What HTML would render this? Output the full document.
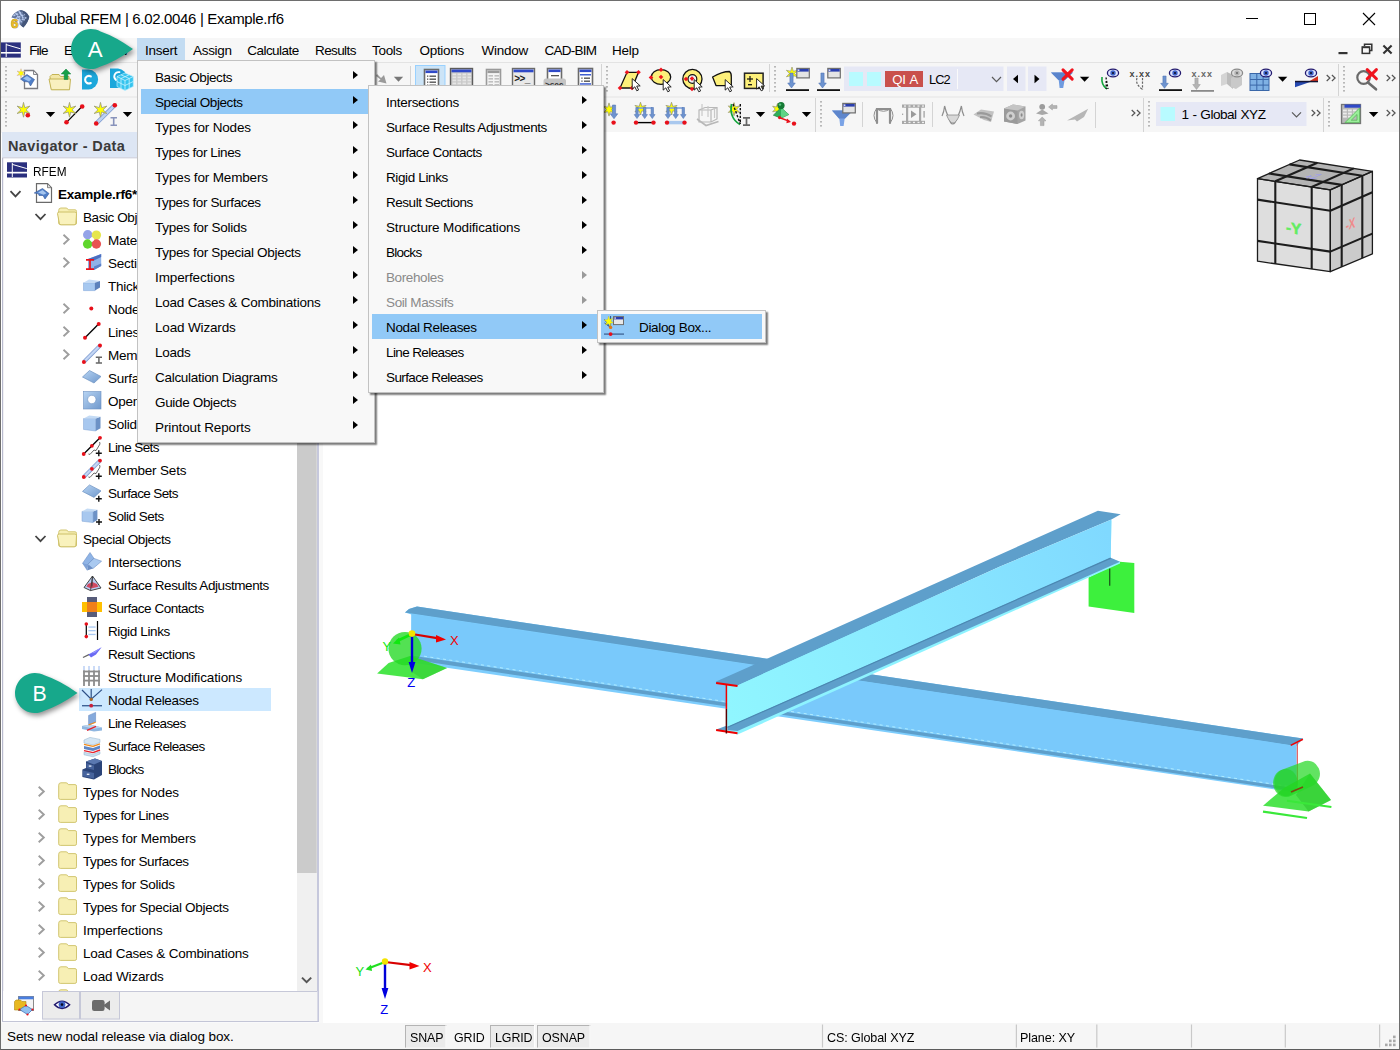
<!DOCTYPE html><html><head><meta charset="utf-8"><title>Dlubal RFEM | 6.02.0046 | Example.rf6</title><style>
*{box-sizing:border-box;margin:0;padding:0}
html,body{width:1400px;height:1050px;overflow:hidden;background:#fff}
body{font-family:"Liberation Sans",sans-serif;font-size:13.5px;letter-spacing:-0.23px;color:#000;position:relative}
.abs{position:absolute}
.t{position:absolute;white-space:pre;line-height:16px;height:16px}
#titlebar{left:0;top:0;width:1400px;height:38px;background:#fff}
#menubar{left:1px;top:38px;width:1398px;height:24px;background:#f7f7f7}
#tb{left:1px;top:62px;width:1398px;height:71px;background:#f6f6f6}
#nav{left:1px;top:133px;width:319px;height:890px;background:#fff}
#view{left:320px;top:132px;width:1079px;height:891px;background:#fff;border-left:3.4px solid #f8f8f8}
#status{left:1px;top:1023px;width:1398px;height:26px;background:#f6f6f6}
.menu{position:absolute;background:#f8f8f8;border:1px solid #c2c2c2;box-shadow:2px 2px 1.5px rgba(0,0,0,.5)}
.mi{position:absolute;left:3px;right:3px;height:25px}
.mi.sel{background:#91c9f7}
.mi .t{top:6px}
.mi.dis .t{color:#8a8a8a}
.arr{position:absolute;width:0;height:0;border-left:5.5px solid #000;border-top:4.9px solid transparent;border-bottom:4.9px solid transparent}
.mi.dis .arr{border-left-color:#9a9a9a}
.row{position:absolute;left:0;height:23px;width:296px}
.row .t{top:4px}
</style></head><body>
<div id="titlebar" class="abs">
<div class="t" style="left:35.5px;top:10px;font-size:15px;letter-spacing:-0.33px;line-height:18px;height:18px">Dlubal RFEM | 6.02.0046 | Example.rf6</div>
<svg class="abs" style="left:0;top:0" width="1400" height="38" viewBox="0 0 1400 38"><path d="M11.4 17.6Q13 12.6 20.2 10Q26.4 10.6 29.3 16.8Q28.4 22 23.4 27.6L19.6 24.4L19.4 19.6Z" fill="#60749c"/><path d="M20.2 10Q26.4 10.6 29.3 16.8Q28.4 22 23.4 27.6L21 25.4Q25 20 25.4 15.4Z" fill="#44567a"/><path d="M13.4 15.8L22.6 12.2M15.6 18.6L25 14.4M18.8 21L26.6 17.4M15.6 13L21.6 22.4M18.8 11.2L24.6 20.4" fill="none" stroke="#b6c8ec" stroke-width="1.5" stroke-dasharray="2 1.2"/><text x="14.7" y="28.4" font-family="Liberation Sans, sans-serif" font-weight="bold" font-size="13.5" fill="#e8bc24" text-anchor="middle" stroke="#8a7020" stroke-width="0.7" paint-order="stroke">6</text><rect x="1246" y="18" width="12" height="1" fill="#000" /><rect x="1304.5" y="13.5" width="11" height="11" fill="none" stroke="#000" stroke-width="1" /><path d="M1363 13L1375 25M1375 13L1363 25" stroke="#000" stroke-width="1.1" fill="none"/></svg>
</div>
<div id="menubar" class="abs">
<div class="abs" style="left:136px;top:0;width:48px;height:23px;background:#c3dcf2"></div>
<div class="t" style="left:28.2px;top:5px;letter-spacing:-0.85px">File</div>
<div class="t" style="left:63px;top:5px;letter-spacing:-0.23px">Edit</div>
<div class="t" style="left:99px;top:5px;letter-spacing:-0.23px">View</div>
<div class="t" style="left:144px;top:5px;letter-spacing:-0.23px">Insert</div>
<div class="t" style="left:192px;top:5px;letter-spacing:-0.3px">Assign</div>
<div class="t" style="left:246.3px;top:5px;letter-spacing:-0.55px">Calculate</div>
<div class="t" style="left:314px;top:5px;letter-spacing:-0.6px">Results</div>
<div class="t" style="left:371px;top:5px;letter-spacing:-0.3px">Tools</div>
<div class="t" style="left:418.5px;top:5px;letter-spacing:-0.3px">Options</div>
<div class="t" style="left:480.5px;top:5px;letter-spacing:-0.23px">Window</div>
<div class="t" style="left:543.5px;top:5px;letter-spacing:-0.75px">CAD-BIM</div>
<div class="t" style="left:611px;top:5px;letter-spacing:-0.23px">Help</div>
<svg class="abs" style="left:0;top:0" width="1398" height="24" viewBox="1 38 1398 24"><rect x="1" y="42.4" width="19.8" height="15.2" fill="#2a2f7e" /><path d="M6.2 43.5V57M6.2 44.6L20.5 48.8" stroke="#fff" stroke-width="1" fill="none"/><rect x="1" y="52" width="19.8" height="1.6" fill="#fff" /><rect x="1338.5" y="52" width="9" height="2.2" fill="#333" /><path d="M1364.5 46V44.3H1371.8V50.5H1370" fill="none" stroke="#333" stroke-width="1.5"/><rect x="1362.2" y="47" width="7.4" height="6.4" fill="none" stroke="#333" stroke-width="1.5" /><rect x="1362.2" y="46.6" width="7.4" height="1.6" fill="#333" /><path d="M1383.4 45.4L1391.6 53.6M1391.6 45.4L1383.4 53.6" stroke="#333" stroke-width="2.1" fill="none"/></svg>
</div>
<div id="tb" class="abs"><svg class="abs" style="left:0;top:0" width="1398" height="71" viewBox="1 62 1398 71" font-family="Liberation Sans, sans-serif">
<rect x="1" y="62" width="1398" height="1" fill="#e3e3e3" />
<rect x="1" y="96.5" width="1398" height="1" fill="#e3e3e3" />
<rect x="5.2" y="66" width="1.6" height="1.6" fill="#a9a9a9"/><rect x="5.2" y="70" width="1.6" height="1.6" fill="#a9a9a9"/><rect x="5.2" y="74" width="1.6" height="1.6" fill="#a9a9a9"/><rect x="5.2" y="78" width="1.6" height="1.6" fill="#a9a9a9"/><rect x="5.2" y="82" width="1.6" height="1.6" fill="#a9a9a9"/><rect x="5.2" y="86" width="1.6" height="1.6" fill="#a9a9a9"/><rect x="5.2" y="90" width="1.6" height="1.6" fill="#a9a9a9"/>
<polygon points="24.5,70.5 33.5,70.5 37.5,74.5 37.5,88.5 24.5,88.5" fill="#fff" stroke="#7a7a80" stroke-width="1.3" />
<polygon points="33.5,70.5 33.5,74.5 37.5,74.5" fill="#e8e8e8" stroke="#7a7a80" stroke-width="0.9" />
<polygon points="20.5,79 27,74.5 34.5,79.5 30.5,86 28.5,82 24,81.5" fill="#4f7fc8" stroke="#3a5a9a" stroke-width="0.6" />
<polygon points="23,78.5 27,76 31.5,79 29,81.5" fill="#9cc0ee" />
<polygon points="21,68.7 21.9,71.74 24.98,71 22.8,73.3 24.98,75.6 21.9,74.86 21,77.9 20.1,74.86 17.02,75.6 19.2,73.3 17.02,71 20.1,71.74" fill="#ffff00" stroke="#caa" stroke-width="0.5" stroke-linejoin="miter"/>
<polygon points="50,76.5 52,74.5 59,74.5 60.5,76.5 69,76.5 69,89.5 51.5,89.5" fill="#f3e7a8" stroke="#c4b456" stroke-width="1" />
<polygon points="49,79 70.5,79 69.5,89.8 51.3,89.8" fill="#f9f0bf" stroke="#c4b456" stroke-width="1" />
<polygon points="66,69 70.8,74 67.8,74 67.8,79.5 64.2,79.5 64.2,74 61.2,74" fill="#17a049" stroke="#0d8038" stroke-width="0.5" />
<path d="M82 69.5H88.5A9.6 10 0 0 1 88.5 89.5H82Z" fill="#1ca7db"/>
<path d="M90.8 76.4A3.8 3.8 0 1 0 90.8 83" fill="none" stroke="#fff" stroke-width="2.1" stroke-linecap="round"/>
<path d="M110 68.5H118A9.8 9.8 0 0 1 127 78V88H110Z" fill="#1ca7db"/>
<path d="M119.5 72.2A4.4 4.4 0 0 0 116 80" fill="none" stroke="#fff" stroke-width="1.8" stroke-linecap="round"/>
<polygon points="117,76.5 125,73 133.3,76.5 133.3,86.5 125,90.5 117,86.5" fill="#35c4ee" stroke="#bdeeff" stroke-width="0.7" />
<path d="M117 76.5L125 80.5L133.3 76.5M125 80.5V90.5M117 81.5L125 85.5L133.3 81.5M121 74.8L129.2 78.5V88.5M129.2 74.8L121 78.5V88.5" fill="none" stroke="#c9f2ff" stroke-width="0.8"/>
<polygon points="377,74 381,78 384,75 386.5,83.5 378,81.5 380.5,79.5 376,76" fill="#9a9a9a" />
<polygon points="393.8,76.8 403.2,76.8 398.5,81.8" fill="#777"/>
<rect x="410" y="66" width="1" height="26" fill="#d4d4d4"/>
<rect x="415.5" y="65.5" width="29.5" height="27" fill="#cce4f7" stroke="#99d1ff" stroke-width="1" />
<rect x="424.5" y="69.5" width="14" height="19" fill="#fff" stroke="#6a6a6a" stroke-width="1.6" />
<rect x="425.5" y="70.5" width="12" height="2.6" fill="#2f49c8" />
<rect x="429.5" y="75.5" width="6.5" height="1.4" fill="#555" />
<rect x="427" y="75.5" width="1.3" height="1.3" fill="#555" />
<rect x="429.5" y="78.5" width="6.5" height="1.4" fill="#555" />
<rect x="427" y="78.5" width="1.3" height="1.3" fill="#555" />
<rect x="429.5" y="81.5" width="6.5" height="1.4" fill="#555" />
<rect x="427" y="81.5" width="1.3" height="1.3" fill="#555" />
<rect x="429.5" y="84.5" width="6.5" height="1.4" fill="#555" />
<rect x="427" y="84.5" width="1.3" height="1.3" fill="#555" />
<rect x="450.5" y="68.5" width="22" height="20" fill="#c9c9c9" stroke="#5c5c5c" stroke-width="1.4" />
<rect x="451.5" y="69.5" width="20" height="2.8" fill="#2f49c8" />
<rect x="452.5" y="73.5" width="3.6" height="1.8" fill="#e6e6e6" />
<rect x="457.5" y="73.5" width="3.6" height="1.8" fill="#e6e6e6" />
<rect x="462.5" y="73.5" width="3.6" height="1.8" fill="#e6e6e6" />
<rect x="467.5" y="73.5" width="3.6" height="1.8" fill="#e6e6e6" />
<rect x="452.5" y="76.5" width="3.6" height="1.8" fill="#e6e6e6" />
<rect x="457.5" y="76.5" width="3.6" height="1.8" fill="#e6e6e6" />
<rect x="462.5" y="76.5" width="3.6" height="1.8" fill="#e6e6e6" />
<rect x="467.5" y="76.5" width="3.6" height="1.8" fill="#e6e6e6" />
<rect x="452.5" y="79.5" width="3.6" height="1.8" fill="#e6e6e6" />
<rect x="457.5" y="79.5" width="3.6" height="1.8" fill="#e6e6e6" />
<rect x="462.5" y="79.5" width="3.6" height="1.8" fill="#e6e6e6" />
<rect x="467.5" y="79.5" width="3.6" height="1.8" fill="#e6e6e6" />
<rect x="452.5" y="82.5" width="3.6" height="1.8" fill="#e6e6e6" />
<rect x="457.5" y="82.5" width="3.6" height="1.8" fill="#e6e6e6" />
<rect x="462.5" y="82.5" width="3.6" height="1.8" fill="#e6e6e6" />
<rect x="467.5" y="82.5" width="3.6" height="1.8" fill="#e6e6e6" />
<rect x="452.5" y="85.5" width="3.6" height="1.8" fill="#e6e6e6" />
<rect x="457.5" y="85.5" width="3.6" height="1.8" fill="#e6e6e6" />
<rect x="462.5" y="85.5" width="3.6" height="1.8" fill="#e6e6e6" />
<rect x="467.5" y="85.5" width="3.6" height="1.8" fill="#e6e6e6" />
<rect x="486.5" y="69.5" width="14" height="19" fill="#f4f4f4" stroke="#9a9a9a" stroke-width="1.6" />
<rect x="487.5" y="70.5" width="12" height="2.6" fill="#9a9a9a" />
<rect x="488.5" y="75" width="4.5" height="1.6" fill="#c0c0c0" />
<rect x="494.5" y="75" width="4.5" height="1.6" fill="#c0c0c0" />
<rect x="488.5" y="78" width="4.5" height="1.6" fill="#c0c0c0" />
<rect x="494.5" y="78" width="4.5" height="1.6" fill="#c0c0c0" />
<rect x="488.5" y="81" width="4.5" height="1.6" fill="#c0c0c0" />
<rect x="494.5" y="81" width="4.5" height="1.6" fill="#c0c0c0" />
<rect x="488.5" y="84" width="4.5" height="1.6" fill="#c0c0c0" />
<rect x="494.5" y="84" width="4.5" height="1.6" fill="#c0c0c0" />
<rect x="512.5" y="68.5" width="22" height="19" fill="#e9e9e9" stroke="#6a6a6a" stroke-width="1.4" />
<rect x="513.5" y="69.5" width="20" height="2.8" fill="#2f49c8" />
<text x="514.2" y="81.5" font-size="10" fill="#222" font-weight="bold" letter-spacing="-0.6">&gt;&gt;_</text>
<rect x="547.5" y="68.5" width="14" height="19" fill="#fff" stroke="#6a6a6a" stroke-width="1.6" />
<rect x="548.5" y="69.5" width="12" height="2.6" fill="#2f49c8" />
<rect x="551" y="75" width="8" height="1.3" fill="#555" />
<rect x="543.5" y="78.5" width="22.5" height="10" fill="#c4c4c4" rx="2.5"/>
<text x="545" y="87.5" font-size="8.5" fill="#333" font-weight="bold">&gt;sec</text>
<rect x="578.5" y="68.5" width="14" height="19" fill="#fff" stroke="#6a6a6a" stroke-width="1.6" />
<rect x="579.5" y="69.5" width="12" height="2.6" fill="#2f49c8" />
<rect x="580" y="74" width="11" height="1.5" fill="#3f5fd0" />
<rect x="584" y="77.5" width="6" height="1.4" fill="#555" />
<rect x="581.3" y="77.5" width="1.3" height="1.3" fill="#555" />
<rect x="584" y="80.5" width="6" height="1.4" fill="#555" />
<rect x="581.3" y="80.5" width="1.3" height="1.3" fill="#555" />
<rect x="580" y="83.2" width="11" height="1.5" fill="#3f5fd0" />
<rect x="601" y="64" width="1" height="28" fill="#d4d4d4"/>
<rect x="606.2" y="66" width="1.6" height="1.6" fill="#a9a9a9"/><rect x="606.2" y="70" width="1.6" height="1.6" fill="#a9a9a9"/><rect x="606.2" y="74" width="1.6" height="1.6" fill="#a9a9a9"/><rect x="606.2" y="78" width="1.6" height="1.6" fill="#a9a9a9"/><rect x="606.2" y="82" width="1.6" height="1.6" fill="#a9a9a9"/><rect x="606.2" y="86" width="1.6" height="1.6" fill="#a9a9a9"/><rect x="606.2" y="90" width="1.6" height="1.6" fill="#a9a9a9"/>
<polygon points="627,72.3 638.5,72.3 632,88 620,88" fill="#fdf07a" stroke="#111" stroke-width="1.3" />
<path d="M624.7 72.3L627 70L629.3 72.3L627 74.6Z" fill="#f0141e"/>
<path d="M636.2 72.3L638.5 70L640.8 72.3L638.5 74.6Z" fill="#f0141e"/>
<path d="M629.7 88L632 85.7L634.3 88L632 90.3Z" fill="#f0141e"/>
<path d="M617.7 88L620 85.7L622.3 88L620 90.3Z" fill="#f0141e"/>
<polygon points="632.2,78.6 632.2,89.1 634.8,86.8 636.8,90.8 638.6,89.9 636.7,86.1 640.2,85.9" fill="#fff" stroke="#111" stroke-width="0.9" stroke-linejoin="round"/>
<ellipse cx="661" cy="77" rx="9.7" ry="7.4" fill="#fdf07a" stroke="#111" stroke-width="1.3"/>
<path d="M658.7 69.8L661 67.5L663.3 69.8L661 72.1Z" fill="#f0141e"/>
<path d="M648.7 77.5L651 75.2L653.3 77.5L651 79.8Z" fill="#f0141e"/>
<path d="M658.7 77L661 74.7L663.3 77L661 79.3Z" fill="#f0141e"/>
<polygon points="663.2,79.6 663.2,90.1 665.8,87.8 667.8,91.8 669.6,90.9 667.7,87.1 671.2,86.9" fill="#fff" stroke="#111" stroke-width="0.9" stroke-linejoin="round"/>
<circle cx="692.4" cy="79" r="9.6" fill="#fdf07a" stroke="#111" stroke-width="1.3"/>
<circle cx="692.4" cy="79" r="4.4" fill="#f3f3f3" stroke="#111" stroke-width="1.2"/>
<path d="M683.7 79L686 76.7L688.3 79L686 81.3Z" fill="#f0141e"/>
<path d="M689.7 78.6L692 76.3L694.3 78.6L692 80.9Z" fill="#f0141e"/>
<path d="M689.7 89L692 86.7L694.3 89L692 91.3Z" fill="#f0141e"/>
<polygon points="694.2,79.6 694.2,90.1 696.8,87.8 698.8,91.8 700.6,90.9 698.7,87.1 702.2,86.9" fill="#fff" stroke="#111" stroke-width="0.9" stroke-linejoin="round"/>
<path d="M712.6 77Q722 71.5 729.5 71.5Q731.5 73 731.3 77V85.6H716Z" fill="#fdf07a" stroke="#111" stroke-width="1.3" stroke-linejoin="round"/>
<polygon points="725.2,79.6 725.2,90.1 727.8,87.8 729.8,91.8 731.6,90.9 729.7,87.1 733.2,86.9" fill="#fff" stroke="#111" stroke-width="0.9" stroke-linejoin="round"/>
<rect x="744.5" y="73.2" width="18.6" height="15.2" fill="#fdf07a" stroke="#222" stroke-width="1.5" />
<line x1="747" y1="79" x2="753" y2="79" stroke="#111" stroke-width="1.2" />
<line x1="750" y1="76" x2="750" y2="82" stroke="#111" stroke-width="1.2" />
<line x1="748" y1="84.7" x2="752" y2="84.7" stroke="#111" stroke-width="1.3" />
<polygon points="756.6,78.6 756.6,89.1 759.2,86.8 761.2,90.8 763,89.9 761.1,86.1 764.6,85.9" fill="#fff" stroke="#111" stroke-width="0.9" stroke-linejoin="round"/>
<rect x="769" y="64" width="1" height="28" fill="#d4d4d4"/>
<rect x="774.2" y="66" width="1.6" height="1.6" fill="#a9a9a9"/><rect x="774.2" y="70" width="1.6" height="1.6" fill="#a9a9a9"/><rect x="774.2" y="74" width="1.6" height="1.6" fill="#a9a9a9"/><rect x="774.2" y="78" width="1.6" height="1.6" fill="#a9a9a9"/><rect x="774.2" y="82" width="1.6" height="1.6" fill="#a9a9a9"/><rect x="774.2" y="86" width="1.6" height="1.6" fill="#a9a9a9"/><rect x="774.2" y="90" width="1.6" height="1.6" fill="#a9a9a9"/>
<polygon points="792,67 793.3,71.25 797.63,70.25 794.6,73.5 797.63,76.75 793.3,75.75 792,80 790.7,75.75 786.37,76.75 789.4,73.5 786.37,70.25 790.7,71.25" fill="#ffff00" stroke="#9a9a7a" stroke-width="0.7" stroke-linejoin="miter"/>
<polygon points="789.9,73 793.1,73 793.1,83 795.3,83 791.5,88 787.7,83 789.9,83" fill="#6d93cf" stroke="#4a6fb0" stroke-width="0.5"/>
<rect x="786" y="89.2" width="23" height="1.8" fill="#111" />
<rect x="796.8" y="68.4" width="12.5" height="9.5" fill="#e4e4e4" stroke="#6e6e6e" stroke-width="1.2"/><rect x="797.4" y="69" width="11.3" height="2.6" fill="#2b3fae"/><rect x="797.8" y="69.4" width="1.6" height="1.6" fill="#dde"/>
<polygon points="820.9,73 824.1,73 824.1,83 826.3,83 822.5,88 818.7,83 820.9,83" fill="#6d93cf" stroke="#4a6fb0" stroke-width="0.5"/>
<rect x="817" y="89.2" width="23" height="1.8" fill="#111" />
<rect x="827.8" y="68.4" width="12.5" height="9.5" fill="#e4e4e4" stroke="#6e6e6e" stroke-width="1.2"/><rect x="828.4" y="69" width="11.3" height="2.6" fill="#2b3fae"/><rect x="828.8" y="69.4" width="1.6" height="1.6" fill="#dde"/>
<rect x="844" y="66.5" width="159.5" height="24.5" fill="#e6e8f5" />
<rect x="849" y="72" width="14" height="14" fill="#b8fbff" />
<rect x="867" y="72" width="14" height="14" fill="#b8fbff" />
<rect x="885" y="71" width="38" height="16" fill="#c9504c" />
<text x="892.3" y="83.8" font-size="13.2" fill="#fff" letter-spacing="-0.3" word-spacing="1.2">QI A</text>
<text x="929" y="83.8" font-size="12.8" fill="#000" letter-spacing="-0.9">LC2</text>
<rect x="957" y="69" width="1" height="20" fill="#fafafa" />
<polyline points="992,77 996.5,81.6 1001,77" fill="none" stroke="#5a5a5a" stroke-width="1.2"/>
<rect x="1007" y="66.5" width="18.5" height="24.5" fill="#e6e8f5" />
<rect x="1028" y="66.5" width="18.5" height="24.5" fill="#e6e8f5" />
<polygon points="1013,79 1018,74.8 1018,83.2" fill="#000" />
<polygon points="1039.5,79 1034.5,74.8 1034.5,83.2" fill="#000" />
<polygon points="1051,72.5 1073,72.5 1064.5,80.5 1063.2,88 1059.6,88 1058.8,80.5" fill="#6f9be0" />
<polygon points="1051,72.5 1073,72.5 1065,80 1058.5,80" fill="#5a84cc" />
<line x1="1063" y1="69.9" x2="1072.2" y2="79.1" stroke="#f0141e" stroke-width="3" stroke-linecap="round"/><line x1="1063" y1="79.1" x2="1072.2" y2="69.9" stroke="#f0141e" stroke-width="3" stroke-linecap="round"/>
<polygon points="1079.9,76.8 1089.3,76.8 1084.6,81.8" fill="#000"/>
<path d="M1102 77Q1101 85 1107 89" fill="none" stroke="#14a63c" stroke-width="1.6"/>
<path d="M1106 77.5L1108 89M1106.2 77.5V89" fill="none" stroke="#111" stroke-width="1.3" stroke-dasharray="2 1.5"/>
<ellipse cx="1113" cy="73" rx="5.6" ry="3.9" fill="#dfe6ff" stroke="#231a6e" stroke-width="1.3"/><circle cx="1113" cy="73" r="2.7" fill="#3f63c8"/><circle cx="1113" cy="73" r="1" fill="#0a0a20"/>
<text x="1129.5" y="76.5" font-size="9" fill="#444" font-weight="bold" letter-spacing="1">x.xx</text>
<path d="M1137 78Q1135 84 1142.5 89.5M1142.5 78V89.5" fill="none" stroke="#666" stroke-width="1.2" stroke-dasharray="2.2 1.4"/>
<polygon points="1162.9,76 1166.1,76 1166.1,83.3 1168.3,83.3 1164.5,88.3 1160.7,83.3 1162.9,83.3" fill="#6d93cf" stroke="#4a6fb0" stroke-width="0.5"/>
<rect x="1159" y="89.2" width="23" height="1.8" fill="#111" />
<ellipse cx="1175" cy="73" rx="5.6" ry="3.9" fill="#dfe6ff" stroke="#231a6e" stroke-width="1.3"/><circle cx="1175" cy="73" r="2.7" fill="#3f63c8"/><circle cx="1175" cy="73" r="1" fill="#0a0a20"/>
<text x="1191.5" y="76.5" font-size="9" fill="#666" font-weight="bold" letter-spacing="1">x.xx</text>
<polygon points="1194.9,78 1198.1,78 1198.1,84.5 1200.3,84.5 1196.5,89.5 1192.7,84.5 1194.9,84.5" fill="#b4b4b4" stroke="#9a9a9a" stroke-width="0.5"/>
<rect x="1191" y="90" width="23" height="1.8" fill="#8a8a8a" />
<polygon points="1221,75 1227,72 1227,84 1221,86" fill="#d4d4d4" />
<polygon points="1227,72 1233,75 1233,89 1227,84" fill="#bcbcbc" />
<polygon points="1231,78 1238,74 1242,77 1242,85 1236,89 1231,87" fill="#c9c9c9" />
<ellipse cx="1237" cy="73" rx="5.6" ry="3.9" fill="#dddddd" stroke="#8a8a8a" stroke-width="1.3"/><circle cx="1237" cy="73" r="2.7" fill="#b5b5b5"/><circle cx="1237" cy="73" r="1" fill="#666"/>
<rect x="1250" y="73.5" width="19" height="17" fill="#7fb1e4" stroke="#3a67a8" stroke-width="1" />
<rect x="1256.3" y="73.5" width="1" height="17" fill="#3a67a8" />
<rect x="1262.6" y="73.5" width="1" height="17" fill="#3a67a8" />
<rect x="1250" y="79" width="19" height="1" fill="#3a67a8" />
<rect x="1250" y="84.6" width="19" height="1" fill="#3a67a8" />
<ellipse cx="1266" cy="73" rx="5.6" ry="3.9" fill="#dfe6ff" stroke="#231a6e" stroke-width="1.3"/><circle cx="1266" cy="73" r="2.7" fill="#3f63c8"/><circle cx="1266" cy="73" r="1" fill="#0a0a20"/>
<polygon points="1277.9,76.8 1287.3,76.8 1282.6,81.8" fill="#000"/>
<polygon points="1295,82 1310,82 1295,87.3" fill="#2548b0" />
<polygon points="1309,81.5 1318,76 1318,81.5" fill="#d6301c" />
<rect x="1295" y="80.8" width="23" height="1.5" fill="#141430" />
<ellipse cx="1311" cy="73" rx="5.6" ry="3.9" fill="#dfe6ff" stroke="#231a6e" stroke-width="1.3"/><circle cx="1311" cy="73" r="2.7" fill="#3f63c8"/><circle cx="1311" cy="73" r="1" fill="#0a0a20"/>
<polyline points="1326.7,75 1329.9,78 1326.7,81" fill="none" stroke="#555" stroke-width="1.2"/><polyline points="1331.9,75 1335.1,78 1331.9,81" fill="none" stroke="#555" stroke-width="1.2"/>
<rect x="1338" y="64" width="1" height="32" fill="#d4d4d4"/>
<rect x="1343.2" y="66" width="1.6" height="1.6" fill="#a9a9a9"/><rect x="1343.2" y="70" width="1.6" height="1.6" fill="#a9a9a9"/><rect x="1343.2" y="74" width="1.6" height="1.6" fill="#a9a9a9"/><rect x="1343.2" y="78" width="1.6" height="1.6" fill="#a9a9a9"/><rect x="1343.2" y="82" width="1.6" height="1.6" fill="#a9a9a9"/><rect x="1343.2" y="86" width="1.6" height="1.6" fill="#a9a9a9"/><rect x="1343.2" y="90" width="1.6" height="1.6" fill="#a9a9a9"/>
<circle cx="1363.6" cy="77.5" r="6.3" fill="none" stroke="#6a6a6a" stroke-width="2.2"/>
<line x1="1368" y1="82.5" x2="1376" y2="89.3" stroke="#6a6a6a" stroke-width="2.6" stroke-linecap="round"/>
<line x1="1367.2" y1="69.6" x2="1376.4" y2="78.8" stroke="#f0141e" stroke-width="3" stroke-linecap="round"/><line x1="1367.2" y1="78.8" x2="1376.4" y2="69.6" stroke="#f0141e" stroke-width="3" stroke-linecap="round"/>
<polyline points="1386.7,75 1389.9,78 1386.7,81" fill="none" stroke="#555" stroke-width="1.2"/><polyline points="1391.9,75 1395.1,78 1391.9,81" fill="none" stroke="#555" stroke-width="1.2"/>
<rect x="5.2" y="101" width="1.6" height="1.6" fill="#a9a9a9"/><rect x="5.2" y="105" width="1.6" height="1.6" fill="#a9a9a9"/><rect x="5.2" y="109" width="1.6" height="1.6" fill="#a9a9a9"/><rect x="5.2" y="113" width="1.6" height="1.6" fill="#a9a9a9"/><rect x="5.2" y="117" width="1.6" height="1.6" fill="#a9a9a9"/><rect x="5.2" y="121" width="1.6" height="1.6" fill="#a9a9a9"/><rect x="5.2" y="125" width="1.6" height="1.6" fill="#a9a9a9"/>
<polygon points="23.5,102.4 24.75,107.63 29.91,106.1 26,109.8 29.91,113.5 24.75,111.97 23.5,117.2 22.25,111.97 17.09,113.5 21,109.8 17.09,106.1 22.25,107.63" fill="#ffff00" stroke="#9a9a7a" stroke-width="0.8" stroke-linejoin="miter"/>
<circle cx="27.8" cy="115.2" r="2.3" fill="#e8101a"/>
<polygon points="45.8,111.9 55.2,111.9 50.5,116.9" fill="#000"/>
<line x1="66.5" y1="122.3" x2="82" y2="106.5" stroke="#000" stroke-width="1.2" />
<polygon points="69.5,102.4 70.75,107.63 75.91,106.1 72,109.8 75.91,113.5 70.75,111.97 69.5,117.2 68.25,111.97 63.09,113.5 67,109.8 63.09,106.1 68.25,107.63" fill="#ffff00" stroke="#9a9a7a" stroke-width="0.8" stroke-linejoin="miter"/>
<circle cx="66.5" cy="122.3" r="2.3" fill="#e8101a"/>
<circle cx="82.2" cy="106.5" r="2.3" fill="#e8101a"/>
<line x1="96.2" y1="123.5" x2="114.6" y2="105.3" stroke="#7f9bd0" stroke-width="4.2" />
<line x1="96.2" y1="123.5" x2="114.6" y2="105.3" stroke="#bcd2f2" stroke-width="2.6" />
<polygon points="100.5,102.4 101.75,107.63 106.91,106.1 103,109.8 106.91,113.5 101.75,111.97 100.5,117.2 99.25,111.97 94.09,113.5 98,109.8 94.09,106.1 99.25,107.63" fill="#ffff00" stroke="#9a9a7a" stroke-width="0.8" stroke-linejoin="miter"/>
<circle cx="96.2" cy="123.5" r="2.3" fill="#e8101a"/>
<circle cx="114.8" cy="105.2" r="2.3" fill="#e8101a"/>
<path d="M110.5 117.8H117M110.5 125.2H117M113.7 117.8V125.2" fill="none" stroke="#8893bb" stroke-width="1.6"/>
<polygon points="122.8,111.9 132.2,111.9 127.5,116.9" fill="#000"/>
<polygon points="609,102.9 610.3,107.25 614.72,106.2 611.6,109.5 614.72,112.8 610.3,111.75 609,116.1 607.7,111.75 603.28,112.8 606.4,109.5 603.28,106.2 607.7,107.25" fill="#ffff00" stroke="#9a9a7a" stroke-width="0.8" stroke-linejoin="miter"/>
<polygon points="612.4,105 615.6,105 615.6,113.8 617.8,113.8 614,118.8 610.2,113.8 612.4,113.8" fill="#6d93cf" stroke="#4a6fb0" stroke-width="0.5"/>
<circle cx="613.6" cy="122.6" r="2.2" fill="#e8101a"/>
<polygon points="640.5,102.2 641.8,106.35 646.04,105.4 643.1,108.6 646.04,111.8 641.8,110.85 640.5,115 639.2,110.85 634.96,111.8 637.9,108.6 634.96,105.4 639.2,106.35" fill="#ffff00" stroke="#9a9a7a" stroke-width="0.8" stroke-linejoin="miter"/><path d="M637 108H652.5" fill="none" stroke="#7fa0d8" stroke-width="1.6"/><polygon points="635.8,107.5 638.2,107.5 638.2,114.6 639.8,114.6 637,118.6 634.2,114.6 635.8,114.6" fill="#6d93cf" stroke="#4a6fb0" stroke-width="0.5"/><polygon points="643.5,107.5 645.9,107.5 645.9,114.6 647.5,114.6 644.7,118.6 641.9,114.6 643.5,114.6" fill="#6d93cf" stroke="#4a6fb0" stroke-width="0.5"/><polygon points="651.1,107.5 653.5,107.5 653.5,114.6 655.1,114.6 652.3,118.6 649.5,114.6 651.1,114.6" fill="#6d93cf" stroke="#4a6fb0" stroke-width="0.5"/><line x1="636" y1="122.6" x2="653.5" y2="122.6" stroke="#000" stroke-width="1.4" /><circle cx="636" cy="122.6" r="2.2" fill="#e8101a"/><circle cx="653.5" cy="122.6" r="2.2" fill="#e8101a"/>
<polygon points="671.5,102.2 672.8,106.35 677.04,105.4 674.1,108.6 677.04,111.8 672.8,110.85 671.5,115 670.2,110.85 665.96,111.8 668.9,108.6 665.96,105.4 670.2,106.35" fill="#ffff00" stroke="#9a9a7a" stroke-width="0.8" stroke-linejoin="miter"/><path d="M668 108H683.5" fill="none" stroke="#7fa0d8" stroke-width="1.6"/><polygon points="666.8,107.5 669.2,107.5 669.2,114.6 670.8,114.6 668,118.6 665.2,114.6 666.8,114.6" fill="#6d93cf" stroke="#4a6fb0" stroke-width="0.5"/><polygon points="674.5,107.5 676.9,107.5 676.9,114.6 678.5,114.6 675.7,118.6 672.9,114.6 674.5,114.6" fill="#6d93cf" stroke="#4a6fb0" stroke-width="0.5"/><polygon points="682.1,107.5 684.5,107.5 684.5,114.6 686.1,114.6 683.3,118.6 680.5,114.6 682.1,114.6" fill="#6d93cf" stroke="#4a6fb0" stroke-width="0.5"/><line x1="667" y1="122.6" x2="684.5" y2="122.6" stroke="#a9c8ee" stroke-width="3.4" /><circle cx="667" cy="122.6" r="2.2" fill="#e8101a"/><circle cx="684.5" cy="122.6" r="2.2" fill="#e8101a"/>
<g stroke="#b8b8b8" fill="none" stroke-width="1.2"><path d="M699 110L705 107.5H717V119L711 122H699ZM699 110H711V122M711 110L717 107.5"/><path d="M697 119L706 125.5L718.5 121.5" stroke-width="1.6"/><path d="M702 104V116M708 106V117M714.5 108V118" stroke="#c8c8c8"/></g>
<polygon points="734,102.6 735.3,106.95 739.72,105.9 736.6,109.2 739.72,112.5 735.3,111.45 734,115.8 732.7,111.45 728.28,112.5 731.4,109.2 728.28,105.9 732.7,106.95" fill="#ffff00" stroke="#9a9a7a" stroke-width="0.8" stroke-linejoin="miter"/>
<path d="M731.5 104Q729 118 740 124.6" fill="none" stroke="#14a63c" stroke-width="1.7"/>
<path d="M733 104L740.3 124M740.3 104V124" fill="none" stroke="#111" stroke-width="1.4" stroke-dasharray="2.4 1.5"/>
<path d="M743 117.8H750M743 125.2H750M746.5 117.8V125.2" fill="none" stroke="#666" stroke-width="1.7"/>
<polygon points="755.8,111.9 765.2,111.9 760.5,116.9" fill="#000"/>
<polygon points="777.5,103.4 778.65,107.01 782.35,106.2 779.8,109 782.35,111.8 778.65,110.99 777.5,114.6 776.35,110.99 772.65,111.8 775.2,109 772.65,106.2 776.35,107.01" fill="#ffff00" stroke="#9a9a7a" stroke-width="0.8" stroke-linejoin="miter"/>
<polygon points="773.3,115.2 781,107.5 788.8,114.6 781,118.2" fill="#2fae5a" stroke="#1a7a3a" stroke-width="0.6" />
<polygon points="781,107.5 788.8,114.6 781,118.2" fill="#5ed486" />
<circle cx="781" cy="105.6" r="3.6" fill="#157a35"/><circle cx="780" cy="104.6" r="1.2" fill="#5fc883"/>
<line x1="780.5" y1="118" x2="789" y2="121.2" stroke="#e8101a" stroke-width="1.4" />
<polygon points="787,118.6 791,122 786.4,123.2" fill="#e8101a" />
<circle cx="779.6" cy="117.6" r="1.6" fill="#e8101a"/>
<circle cx="794" cy="123.6" r="2.2" fill="#e8101a"/>
<polygon points="801.8,111.9 811.2,111.9 806.5,116.9" fill="#000"/>
<rect x="815" y="98" width="1" height="34" fill="#d4d4d4"/>
<rect x="820.2" y="101" width="1.6" height="1.6" fill="#a9a9a9"/><rect x="820.2" y="105" width="1.6" height="1.6" fill="#a9a9a9"/><rect x="820.2" y="109" width="1.6" height="1.6" fill="#a9a9a9"/><rect x="820.2" y="113" width="1.6" height="1.6" fill="#a9a9a9"/><rect x="820.2" y="117" width="1.6" height="1.6" fill="#a9a9a9"/><rect x="820.2" y="121" width="1.6" height="1.6" fill="#a9a9a9"/><rect x="820.2" y="125" width="1.6" height="1.6" fill="#a9a9a9"/>
<polygon points="832,110.5 853,110.5 844.6,119 843.6,126 840.2,126 839.4,119" fill="#7aa3e6" />
<polygon points="832,110.5 853,110.5 845,118.5 839,118.5" fill="#5e86cc" />
<rect x="842.8" y="103.4" width="12.5" height="9.5" fill="#e4e4e4" stroke="#6e6e6e" stroke-width="1.2"/><rect x="843.4" y="104" width="11.3" height="2.6" fill="#2b3fae"/><rect x="843.8" y="104.4" width="1.6" height="1.6" fill="#dde"/>
<rect x="862" y="102" width="1" height="25" fill="#d4d4d4"/>
<g fill="none" stroke="#8e8e8e"><path d="M877 123V109H890V123" stroke-width="2.2" stroke-linecap="round"/><path d="M877 109Q883.5 113.5 890 109" stroke-width="1"/><path d="M877 108Q871 115.5 877 123M890 108Q896 115.5 890 123" stroke-width="1"/></g>
<g fill="#8e8e8e"><rect x="902" y="104.5" width="23" height="3.2" fill="#a8a8a8"/><rect x="902" y="120.8" width="23" height="3.2" fill="#a8a8a8"/><rect x="906" y="107" width="2.2" height="14" fill="#a8a8a8"/><rect x="919" y="107" width="2.2" height="14" fill="#a8a8a8"/><polygon points="911,110.5 916.5,114.3 911,118" fill="#9a9a9a"/><rect x="923.4" y="111" width="1.4" height="6.6" fill="#a8a8a8"/><rect x="902" y="113.6" width="1.2" height="1.4" fill="#a8a8a8"/></g>
<rect x="904" y="105.4" width="2" height="1.3" fill="#f0f0f0" />
<rect x="904" y="121.8" width="2" height="1.3" fill="#f0f0f0" />
<rect x="908.5" y="105.4" width="2" height="1.3" fill="#f0f0f0" />
<rect x="908.5" y="121.8" width="2" height="1.3" fill="#f0f0f0" />
<rect x="913" y="105.4" width="2" height="1.3" fill="#f0f0f0" />
<rect x="913" y="121.8" width="2" height="1.3" fill="#f0f0f0" />
<rect x="917.5" y="105.4" width="2" height="1.3" fill="#f0f0f0" />
<rect x="917.5" y="121.8" width="2" height="1.3" fill="#f0f0f0" />
<rect x="922" y="105.4" width="2" height="1.3" fill="#f0f0f0" />
<rect x="922" y="121.8" width="2" height="1.3" fill="#f0f0f0" />
<rect x="932" y="102" width="1" height="25" fill="#d4d4d4"/>
<path d="M942 116Q944 112 944.6 106Q946 112 948 116Q952.5 132 958 116Q960 112 961.4 106Q962 112 964 116" fill="none" stroke="#8e8e8e" stroke-width="1.2"/><path d="M946.5 115H959.5Q953 131 946.5 115Z" fill="#d8d8d8" stroke="#8e8e8e" stroke-width="0.8"/>
<polygon points="973.5,114.5 981,109.5 994,111.5 991,122 984,120" fill="#c2c2c2" />
<path d="M977 113.5Q985 112 991.5 116.5M980 117.2Q986 116.5 990.8 120.5" fill="none" stroke="#9a9a9a" stroke-width="2"/>
<polygon points="1004,108.5 1013,104.5 1025.5,106.5 1025.5,120.5 1017.5,124 1004,121.5" fill="#a4a4a4" />
<polygon points="1004,108.5 1017.5,110.5 1017.5,124 1004,121.5" fill="#9a9a9a" />
<polygon points="1004,108.5 1013,104.5 1025.5,106.5 1017.5,110.5" fill="#c4c4c4" />
<circle cx="1010.6" cy="116" r="4.4" fill="#cfcfcf"/><circle cx="1010.6" cy="116" r="1.7" fill="#8a8a8a"/><ellipse cx="1021.6" cy="115" rx="2.6" ry="4.2" fill="#cfcfcf"/><ellipse cx="1021.6" cy="115" rx="1" ry="1.8" fill="#8a8a8a"/>
<circle cx="1042.2" cy="106.8" r="2.9" fill="#9c9c9c"/>
<polygon points="1036,113.5 1042.2,109.5 1048.5,113.5 1042.2,115" fill="#a8a8a8" />
<polygon points="1048.6,107 1052.4,104 1052.4,105.6 1057,105.6 1057,108.4 1052.4,108.4 1052.4,110" fill="#b4b4b4" stroke="#9a9a9a" stroke-width="0.5" />
<polygon points="1042.2,117 1046,120.8 1044,120.8 1044,125.6 1040.4,125.6 1040.4,120.8 1038.4,120.8" fill="#b4b4b4" stroke="#9a9a9a" stroke-width="0.5" />
<polygon points="1067,120.6 1088.2,108.8 1084,117 1077,121.5 1075,119.5" fill="#b6b6b6" />
<rect x="1095" y="102" width="1" height="26" fill="#d4d4d4"/>
<polyline points="1131.7,110 1134.9,113 1131.7,116" fill="none" stroke="#555" stroke-width="1.2"/><polyline points="1136.9,110 1140.1,113 1136.9,116" fill="none" stroke="#555" stroke-width="1.2"/>
<rect x="1143" y="98" width="1" height="34" fill="#d4d4d4"/>
<rect x="1148.2" y="101" width="1.6" height="1.6" fill="#a9a9a9"/><rect x="1148.2" y="105" width="1.6" height="1.6" fill="#a9a9a9"/><rect x="1148.2" y="109" width="1.6" height="1.6" fill="#a9a9a9"/><rect x="1148.2" y="113" width="1.6" height="1.6" fill="#a9a9a9"/><rect x="1148.2" y="117" width="1.6" height="1.6" fill="#a9a9a9"/><rect x="1148.2" y="121" width="1.6" height="1.6" fill="#a9a9a9"/><rect x="1148.2" y="125" width="1.6" height="1.6" fill="#a9a9a9"/>
<rect x="1156" y="102" width="150.5" height="24" fill="#e6e8f5" />
<rect x="1160.5" y="107" width="14.5" height="14" fill="#b8fbff" />
<text x="1181.5" y="119.2" font-size="13.6" fill="#000" letter-spacing="-0.5" word-spacing="0.6">1 - Global XYZ</text>
<polyline points="1292,112.3 1296.5,116.9 1301,112.3" fill="none" stroke="#5a5a5a" stroke-width="1.2"/>
<polyline points="1311.7,110 1314.9,113 1311.7,116" fill="none" stroke="#555" stroke-width="1.2"/><polyline points="1316.9,110 1320.1,113 1316.9,116" fill="none" stroke="#555" stroke-width="1.2"/>
<rect x="1323" y="98" width="1" height="34" fill="#d4d4d4"/>
<rect x="1328.2" y="101" width="1.6" height="1.6" fill="#a9a9a9"/><rect x="1328.2" y="105" width="1.6" height="1.6" fill="#a9a9a9"/><rect x="1328.2" y="109" width="1.6" height="1.6" fill="#a9a9a9"/><rect x="1328.2" y="113" width="1.6" height="1.6" fill="#a9a9a9"/><rect x="1328.2" y="117" width="1.6" height="1.6" fill="#a9a9a9"/><rect x="1328.2" y="121" width="1.6" height="1.6" fill="#a9a9a9"/><rect x="1328.2" y="125" width="1.6" height="1.6" fill="#a9a9a9"/>
<rect x="1341.5" y="104.5" width="19" height="19" fill="#b9b9b9" stroke="#767676" stroke-width="1.3" />
<rect x="1344.5" y="104.5" width="16" height="3.2" fill="#2f49c8" />
<rect x="1343" y="109.5" width="3.8" height="1.9" fill="#ececec" />
<rect x="1348" y="109.5" width="3.8" height="1.9" fill="#ececec" />
<rect x="1353" y="109.5" width="3.8" height="1.9" fill="#ececec" />
<rect x="1343" y="112.6" width="3.8" height="1.9" fill="#ececec" />
<rect x="1348" y="112.6" width="3.8" height="1.9" fill="#ececec" />
<rect x="1353" y="112.6" width="3.8" height="1.9" fill="#ececec" />
<rect x="1343" y="115.7" width="3.8" height="1.9" fill="#ececec" />
<rect x="1348" y="115.7" width="3.8" height="1.9" fill="#ececec" />
<rect x="1353" y="115.7" width="3.8" height="1.9" fill="#ececec" />
<polygon points="1359.6,108 1359.6,122.6 1345,122.6" fill="#9aee9a" stroke="#58b858" stroke-width="0.8" />
<polygon points="1357,114.5 1357,120.2 1351.3,120.2" fill="#b9b9b9" stroke="#58b858" stroke-width="0.8" />
<polygon points="1368.9,111.9 1378.3,111.9 1373.6,116.9" fill="#000"/>
<polyline points="1386.7,110 1389.9,113 1386.7,116" fill="none" stroke="#555" stroke-width="1.2"/><polyline points="1391.9,110 1395.1,113 1391.9,116" fill="none" stroke="#555" stroke-width="1.2"/>
</svg></div>
<div id="nav" class="abs">
<div class="abs" style="left:1px;top:-1px;width:318px;height:25.4px;background:#dde6f4"></div>
<div class="t" style="left:7px;top:4.5px;font-weight:bold;font-size:14.5px;letter-spacing:0.38px;color:#3a3a3a">Navigator - Data</div>
<div class="row" style="top:27px">
<div class="t" style="left:32px;letter-spacing:0;transform:scaleX(.875);transform-origin:0 0;">RFEM</div>
</div>
<div class="row" style="top:50px">
<div class="t" style="left:57px;font-weight:bold;">Example.rf6*</div>
</div>
<div class="row" style="top:73px">
<div class="t" style="left:82px;letter-spacing:-0.419px;">Basic Objects</div>
</div>
<div class="row" style="top:96px">
<div class="t" style="left:107px;">Materials</div>
</div>
<div class="row" style="top:119px">
<div class="t" style="left:107px;">Sections</div>
</div>
<div class="row" style="top:142px">
<div class="t" style="left:107px;">Thicknesses</div>
</div>
<div class="row" style="top:165px">
<div class="t" style="left:107px;">Nodes</div>
</div>
<div class="row" style="top:188px">
<div class="t" style="left:107px;">Lines</div>
</div>
<div class="row" style="top:211px">
<div class="t" style="left:107px;">Members</div>
</div>
<div class="row" style="top:234px">
<div class="t" style="left:107px;">Surfaces</div>
</div>
<div class="row" style="top:257px">
<div class="t" style="left:107px;">Openings</div>
</div>
<div class="row" style="top:280px">
<div class="t" style="left:107px;">Solids</div>
</div>
<div class="row" style="top:303px">
<div class="t" style="left:107px;letter-spacing:-0.605px;">Line Sets</div>
</div>
<div class="row" style="top:326px">
<div class="t" style="left:107px;letter-spacing:-0.182px;">Member Sets</div>
</div>
<div class="row" style="top:349px">
<div class="t" style="left:107px;letter-spacing:-0.622px;">Surface Sets</div>
</div>
<div class="row" style="top:372px">
<div class="t" style="left:107px;letter-spacing:-0.493px;">Solid Sets</div>
</div>
<div class="row" style="top:395px">
<div class="t" style="left:82px;letter-spacing:-0.41px;">Special Objects</div>
</div>
<div class="row" style="top:418px">
<div class="t" style="left:107px;letter-spacing:-0.274px;">Intersections</div>
</div>
<div class="row" style="top:441px">
<div class="t" style="left:107px;letter-spacing:-0.434px;">Surface Results Adjustments</div>
</div>
<div class="row" style="top:464px">
<div class="t" style="left:107px;letter-spacing:-0.487px;">Surface Contacts</div>
</div>
<div class="row" style="top:487px">
<div class="t" style="left:107px;letter-spacing:-0.378px;">Rigid Links</div>
</div>
<div class="row" style="top:510px">
<div class="t" style="left:107px;letter-spacing:-0.467px;">Result Sections</div>
</div>
<div class="row" style="top:533px">
<div class="t" style="left:107px;letter-spacing:-0.144px;">Structure Modifications</div>
</div>
<div class="row" style="top:556px">
<div class="abs" style="left:78px;top:-1px;width:192px;height:23px;background:#cce8ff"></div>
<div class="t" style="left:107px;letter-spacing:-0.327px;">Nodal Releases</div>
</div>
<div class="row" style="top:579px">
<div class="t" style="left:107px;letter-spacing:-0.609px;">Line Releases</div>
</div>
<div class="row" style="top:602px">
<div class="t" style="left:107px;letter-spacing:-0.62px;">Surface Releases</div>
</div>
<div class="row" style="top:625px">
<div class="t" style="left:107px;letter-spacing:-0.722px;">Blocks</div>
</div>
<div class="row" style="top:648px">
<div class="t" style="left:82px;letter-spacing:-0.16px;">Types for Nodes</div>
</div>
<div class="row" style="top:671px">
<div class="t" style="left:82px;letter-spacing:-0.393px;">Types for Lines</div>
</div>
<div class="row" style="top:694px">
<div class="t" style="left:82px;letter-spacing:-0.155px;">Types for Members</div>
</div>
<div class="row" style="top:717px">
<div class="t" style="left:82px;letter-spacing:-0.382px;">Types for Surfaces</div>
</div>
<div class="row" style="top:740px">
<div class="t" style="left:82px;letter-spacing:-0.273px;">Types for Solids</div>
</div>
<div class="row" style="top:763px">
<div class="t" style="left:82px;letter-spacing:-0.292px;">Types for Special Objects</div>
</div>
<div class="row" style="top:786px">
<div class="t" style="left:82px;letter-spacing:-0.107px;">Imperfections</div>
</div>
<div class="row" style="top:809px">
<div class="t" style="left:82px;letter-spacing:-0.223px;">Load Cases &amp; Combinations</div>
</div>
<div class="row" style="top:832px">
<div class="t" style="left:82px;letter-spacing:-0.162px;">Load Wizards</div>
</div>
<svg class="abs" style="left:0;top:0" width="296" height="858" viewBox="1 133 296 858"><defs><linearGradient id="gb" x1="0" y1="0" x2="1" y2="1"><stop offset="0" stop-color="#b7d4f3"/><stop offset="1" stop-color="#6f98cc"/></linearGradient></defs><rect x="7" y="162.3" width="20" height="15.2" fill="#2a2f7e" /><path d="M12.3 163V177M12.3 164.4L26.8 168.6" stroke="#fff" stroke-width="1" fill="none"/><rect x="7" y="171.8" width="20" height="1.7" fill="#fff" /><polyline points="10.5,191.2 15.5,196.4 20.5,191.2" fill="none" stroke="#454545" stroke-width="1.8"/><polygon points="36.5,183.7 47.5,183.7 51.5,187.7 51.5,202.3 36.5,202.3" fill="#fff" stroke="#6a6a6a" stroke-width="1.2" /><polygon points="47.5,183.7 47.5,187.7 51.5,187.7" fill="#e4e4e4" stroke="#6a6a6a" stroke-width="0.8" /><polygon points="34.2,193 42.5,188.5 49,193.5 45,199 43,195.5 39,195.5 38.5,193.8" fill="#4f7fc8" stroke="#34579a" stroke-width="0.6" /><polygon points="38,192.4 42.5,190 46.5,193.2 43.5,194.8" fill="#a6c6f0" /><polyline points="35.5,214 40.5,219.2 45.5,214" fill="none" stroke="#454545" stroke-width="1.8"/><path d="M58.7 210.4Q58.7 208 60.9 208H66.1Q67.5 208 68.3 209.8H75.1Q76.5 209.8 76.5 211.4V223Q76.5 224.6 74.9 224.6H60.3Q58.7 224.6 58.7 223Z" fill="#f7efb4" stroke="#d2c672" stroke-width="1"/><path d="M57.5 213.6Q57.5 212 59.3 212H74.9Q76.7 212 76.5 213.8L75.9 223.2Q75.7 224.8 74.1 224.8H61.1Q59.5 224.8 59.3 223.2Z" fill="#f9f2bd" stroke="#cdc068" stroke-width="1"/><polyline points="63.5,234.8 68.6,239.5 63.5,244.2" fill="none" stroke="#9e9e9e" stroke-width="1.9"/><circle cx="87.7" cy="234.8" r="4.7" fill="#94a3e8"/><circle cx="96.4" cy="235.1" r="4.7" fill="#e6e64c"/><circle cx="87.6" cy="244" r="4.7" fill="#5fd62c"/><circle cx="96.4" cy="244" r="4.7" fill="#e85252"/><circle cx="92" cy="239.6" r="2" fill="#fff"/><polyline points="63.5,257.8 68.6,262.5 63.5,267.2" fill="none" stroke="#9e9e9e" stroke-width="1.9"/><polygon points="88,259 101.2,254 101.2,266 94,270 88,270" fill="#8fb2e8" /><polygon points="88,259 101.2,254 101.2,257 94,260.4" fill="#4c6fc0" /><polygon points="94,266.5 101.2,263.4 101.2,266 94,270" fill="#5c82c8" /><path d="M86 259.8H94M86 269.2H94M90 259.8V269.2" stroke="#e8101a" stroke-width="1.7" fill="none"/><polygon points="83.5,282.8 95,282.8 95,290.6 83.5,290.6" fill="#a6c8f0" stroke="#86aadc" stroke-width="0.6" /><polygon points="83.5,282.8 89,279.5 100,281 95,282.8" fill="#c6dcf6" /><polygon points="95,282.8 100,281 100,287.6 95,290.6" fill="#5d82bc" /><polyline points="63.5,303.8 68.6,308.5 63.5,313.2" fill="none" stroke="#9e9e9e" stroke-width="1.9"/><circle cx="91.3" cy="308.5" r="2" fill="#e8101a"/><polyline points="63.5,326.8 68.6,331.5 63.5,336.2" fill="none" stroke="#9e9e9e" stroke-width="1.9"/><line x1="85" y1="337.7" x2="98.6" y2="324" stroke="#000" stroke-width="1.3" /><circle cx="85" cy="337.7" r="2" fill="#e8101a"/><circle cx="98.7" cy="324" r="2" fill="#e8101a"/><polyline points="63.5,349.8 68.6,354.5 63.5,359.2" fill="none" stroke="#9e9e9e" stroke-width="1.9"/><line x1="83.9" y1="361.8" x2="100" y2="345.6" stroke="#7f9bd0" stroke-width="3.8" /><line x1="83.9" y1="361.8" x2="100" y2="345.6" stroke="#c3d6f4" stroke-width="2.2" /><circle cx="83.9" cy="361.9" r="2" fill="#e8101a"/><circle cx="100" cy="345.6" r="2" fill="#e8101a"/><path d="M95.8 357.2H102M95.8 363H102M98.9 357.2V363" stroke="#666" stroke-width="1.5" fill="none"/><polygon points="82.5,377 89.5,370.5 101,376.5 94,383" fill="url(#gb)" stroke="#6d92c2" stroke-width="0.7" /><rect x="83.5" y="391.5" width="17.5" height="17.5" fill="url(#gb)" stroke="#6d92c2" stroke-width="0.6" /><circle cx="91.8" cy="399.5" r="4.2" fill="#fff" stroke="#6d92c2" stroke-width="0.6"/><polygon points="83.5,418.52 95.74,418.52 95.74,431 83.5,429.44" fill="#a8c8ef" stroke="#7fa3d4" stroke-width="0.5" /><polygon points="95.74,418.52 100.5,416.65 100.5,428.19 95.74,431" fill="#6d92c6" /><polygon points="83.5,418.52 89.21,415.4 100.5,416.65 95.74,418.52" fill="#c4dbf5" /><line x1="83.7" y1="454" x2="100" y2="437.8" stroke="#000" stroke-width="1.3" /><path d="M88.4 454L90 454.4L94 450L96 450.6L100 444L99.6 442" fill="none" stroke="#444" stroke-width="0.8"/><circle cx="83.7" cy="454" r="1.9" fill="#e8101a"/><circle cx="91.9" cy="445.8" r="1.9" fill="#e8101a"/><circle cx="100" cy="437.8" r="1.9" fill="#e8101a"/><path d="M95.8 453.2H101.8M98.8 450.2V456.2" stroke="#111" stroke-width="1.4" fill="none"/><line x1="83.9" y1="476.8" x2="100" y2="460.6" stroke="#7f9bd0" stroke-width="3.8" /><line x1="83.9" y1="476.8" x2="100" y2="460.6" stroke="#c3d6f4" stroke-width="2.2" /><path d="M88.4 477L90 477.4L94 473L96 473.6L100 467L99.6 465" fill="none" stroke="#444" stroke-width="0.8"/><circle cx="83.8" cy="477" r="1.9" fill="#e8101a"/><circle cx="91.9" cy="468.8" r="1.9" fill="#e8101a"/><circle cx="100" cy="460.6" r="1.9" fill="#e8101a"/><path d="M95.8 476.2H101.8M98.8 473.2V479.2" stroke="#111" stroke-width="1.4" fill="none"/><polygon points="82.5,491.4 89.5,484.9 101,490.9 94,497.4" fill="url(#gb)" stroke="#6d92c2" stroke-width="0.7" /><path d="M95.8 498.8H101.8M98.8 495.8V501.8" stroke="#111" stroke-width="1.4" fill="none"/><polygon points="82,511.4 93.09,511.4 93.09,522.6 82,521.2" fill="#a8c8ef" stroke="#7fa3d4" stroke-width="0.5" /><polygon points="93.09,511.4 97.4,509.72 97.4,520.08 93.09,522.6" fill="#6d92c6" /><polygon points="82,511.4 87.17,508.6 97.4,509.72 93.09,511.4" fill="#c4dbf5" /><path d="M96 522H102M99 519V525" stroke="#111" stroke-width="1.4" fill="none"/><polyline points="35.5,536 40.5,541.2 45.5,536" fill="none" stroke="#454545" stroke-width="1.8"/><path d="M58.7 532.4Q58.7 530 60.9 530H66.1Q67.5 530 68.3 531.8H75.1Q76.5 531.8 76.5 533.4V545Q76.5 546.6 74.9 546.6H60.3Q58.7 546.6 58.7 545Z" fill="#f7efb4" stroke="#d2c672" stroke-width="1"/><path d="M57.5 535.6Q57.5 534 59.3 534H74.9Q76.7 534 76.5 535.8L75.9 545.2Q75.7 546.8 74.1 546.8H61.1Q59.5 546.8 59.3 545.2Z" fill="#f9f2bd" stroke="#cdc068" stroke-width="1"/><polygon points="82.5,563.4 90,552.5 94,558.4 86.6,565.4" fill="#8fb4e6" stroke="#5d83bc" stroke-width="0.5" /><polygon points="86.6,565.4 94,558.4 101.6,561.2 93,568.5" fill="#a9c9f0" stroke="#5d83bc" stroke-width="0.5" /><polygon points="82.4,563.6 88.5,564.4 87,570.6" fill="#7fa2d6" /><polygon points="88.5,564.4 93,568.5 87,570.6" fill="#6d90c6" /><polygon points="92.5,576 84,587.5 90.5,590.6 101,588" fill="#b8ccf2" stroke="#333" stroke-width="0.9" /><polygon points="88,584 92.4,582 97,584 98.4,586.8 91,588.4 86.4,586.4" fill="#d24a62" /><path d="M92.5 576L90.5 590.6M92.5 576L92 586.5" stroke="#333" stroke-width="0.8" fill="none"/><rect x="87" y="597" width="10" height="20" fill="#575c7a" /><rect x="82" y="602" width="20" height="10" fill="#ffc000" /><rect x="87" y="602" width="10" height="10" fill="#f0801a" /><rect x="88.4" y="626.4" width="7.2" height="1.3" fill="#a9c9f2" /><rect x="88.4" y="630" width="7.2" height="1.3" fill="#a9c9f2" /><rect x="88.4" y="633.8" width="7.2" height="1.3" fill="#a9c9f2" /><line x1="86.3" y1="624" x2="86.3" y2="636.5" stroke="#000" stroke-width="1.2" /><line x1="97.5" y1="621" x2="97.5" y2="640" stroke="#000" stroke-width="1.2" /><circle cx="86.3" cy="624" r="1.8" fill="#e8101a"/><circle cx="86.3" cy="636.6" r="1.8" fill="#e8101a"/><line x1="83" y1="657.5" x2="89.4" y2="654.4" stroke="#666" stroke-width="1.3" /><polygon points="88.4,654.6 101.6,647.2 96,654.4 91,657.4" fill="#6a6af4" /><polygon points="91,653.6 101.6,647.2 95,652.8" fill="#9898ff" /><rect x="83.4" y="666" width="1.2" height="4.4" fill="#a9c4f2" /><rect x="83.1" y="670.4" width="1.8" height="15.6" fill="#8c8c8c" /><rect x="88.4" y="666" width="1.2" height="4.4" fill="#a9c4f2" /><rect x="88.1" y="670.4" width="1.8" height="15.6" fill="#8c8c8c" /><rect x="93.4" y="666" width="1.2" height="4.4" fill="#a9c4f2" /><rect x="93.1" y="670.4" width="1.8" height="15.6" fill="#8c8c8c" /><rect x="98.4" y="666" width="1.2" height="4.4" fill="#a9c4f2" /><rect x="98.1" y="670.4" width="1.8" height="15.6" fill="#8c8c8c" /><rect x="83.1" y="670.6" width="16.8" height="1.8" fill="#8c8c8c" /><rect x="83.1" y="675.1" width="16.8" height="1.8" fill="#8c8c8c" /><rect x="83.1" y="679.7" width="16.8" height="1.8" fill="#8c8c8c" /><path d="M82 690L91.2 699.2L102 689.6M91.2 689V699.2" stroke="#2d4f86" stroke-width="1.2" fill="none"/><line x1="82" y1="705.7" x2="102" y2="705.7" stroke="#3e6296" stroke-width="1.4" /><circle cx="91.2" cy="699.4" r="1.7" fill="#a86a28"/><circle cx="91.2" cy="705.7" r="1.9" fill="#c8203c"/><polygon points="88.6,715.4 95.6,712.4 95.6,722 88.6,725" fill="#86aadc" stroke="#5d83bc" stroke-width="0.5" /><polygon points="82,726 90,724.4 102,727.6 102,730.6 94,731.6 82,729" fill="#8fb6e0" /><polygon points="82,726 90,724.4 102,727.6 94,728.8" fill="#b9d4ee" /><line x1="88.6" y1="725" x2="95.6" y2="722.2" stroke="#f08a1a" stroke-width="1.2" /><line x1="87" y1="730.4" x2="96" y2="726.4" stroke="#e8202a" stroke-width="1.2" /><polygon points="84,740 90,737.4 100,739.4 100,742.4 93,745 84,743" fill="#d4e6f4" stroke="#8fb0cc" stroke-width="0.5" /><line x1="84" y1="744.4" x2="93" y2="746.4" stroke="#f08a1a" stroke-width="1.3" /><line x1="93" y1="746.4" x2="100" y2="743.8" stroke="#f08a1a" stroke-width="1.3" /><polygon points="84,746 93,748 100,745.4 100,748.4 93,751 84,749" fill="#5f86c4" /><line x1="84" y1="750.6" x2="93" y2="752.6" stroke="#e8202a" stroke-width="1.4" /><line x1="93" y1="752.6" x2="100" y2="750" stroke="#e8202a" stroke-width="1.4" /><polygon points="84,752.2 93,754.2 100,751.6 100,754 93,756.8 84,754.8" fill="#c9deee" stroke="#8fb0cc" stroke-width="0.5" /><polygon points="86,761.6 95,758.4 102,761 102,775 94,779.6 82.4,777 82.4,769.4 86,768" fill="#2b4478" /><polygon points="86,761.6 95,758.4 102,761 94,764.4" fill="#5a78b0" /><polygon points="86.4,763 94,765.4 94,770 86.4,768" fill="#46639c" /><polygon points="82.8,770.6 94,773 94,778.6 82.8,776.2" fill="#46639c" /><rect x="88.8" y="765.4" width="2.6" height="1.4" fill="#dfe6f4" /><rect x="86.8" y="773.6" width="2.6" height="1.4" fill="#dfe6f4" /><polyline points="38.7,786.8 43.8,791.5 38.7,796.2" fill="none" stroke="#9e9e9e" stroke-width="1.9"/><path d="M58.7 785.2Q58.7 782.8 60.9 782.8H66.1Q67.5 782.8 68.3 784.6H75.1Q76.5 784.6 76.5 786.2V797.8Q76.5 799.4 74.9 799.4H60.3Q58.7 799.4 58.7 797.8Z" fill="#f7efb4" stroke="#d2c672" stroke-width="1"/><polyline points="38.7,809.8 43.8,814.5 38.7,819.2" fill="none" stroke="#9e9e9e" stroke-width="1.9"/><path d="M58.7 808.2Q58.7 805.8 60.9 805.8H66.1Q67.5 805.8 68.3 807.6H75.1Q76.5 807.6 76.5 809.2V820.8Q76.5 822.4 74.9 822.4H60.3Q58.7 822.4 58.7 820.8Z" fill="#f7efb4" stroke="#d2c672" stroke-width="1"/><polyline points="38.7,832.8 43.8,837.5 38.7,842.2" fill="none" stroke="#9e9e9e" stroke-width="1.9"/><path d="M58.7 831.2Q58.7 828.8 60.9 828.8H66.1Q67.5 828.8 68.3 830.6H75.1Q76.5 830.6 76.5 832.2V843.8Q76.5 845.4 74.9 845.4H60.3Q58.7 845.4 58.7 843.8Z" fill="#f7efb4" stroke="#d2c672" stroke-width="1"/><polyline points="38.7,855.8 43.8,860.5 38.7,865.2" fill="none" stroke="#9e9e9e" stroke-width="1.9"/><path d="M58.7 854.2Q58.7 851.8 60.9 851.8H66.1Q67.5 851.8 68.3 853.6H75.1Q76.5 853.6 76.5 855.2V866.8Q76.5 868.4 74.9 868.4H60.3Q58.7 868.4 58.7 866.8Z" fill="#f7efb4" stroke="#d2c672" stroke-width="1"/><polyline points="38.7,878.8 43.8,883.5 38.7,888.2" fill="none" stroke="#9e9e9e" stroke-width="1.9"/><path d="M58.7 877.2Q58.7 874.8 60.9 874.8H66.1Q67.5 874.8 68.3 876.6H75.1Q76.5 876.6 76.5 878.2V889.8Q76.5 891.4 74.9 891.4H60.3Q58.7 891.4 58.7 889.8Z" fill="#f7efb4" stroke="#d2c672" stroke-width="1"/><polyline points="38.7,901.8 43.8,906.5 38.7,911.2" fill="none" stroke="#9e9e9e" stroke-width="1.9"/><path d="M58.7 900.2Q58.7 897.8 60.9 897.8H66.1Q67.5 897.8 68.3 899.6H75.1Q76.5 899.6 76.5 901.2V912.8Q76.5 914.4 74.9 914.4H60.3Q58.7 914.4 58.7 912.8Z" fill="#f7efb4" stroke="#d2c672" stroke-width="1"/><polyline points="38.7,924.8 43.8,929.5 38.7,934.2" fill="none" stroke="#9e9e9e" stroke-width="1.9"/><path d="M58.7 923.2Q58.7 920.8 60.9 920.8H66.1Q67.5 920.8 68.3 922.6H75.1Q76.5 922.6 76.5 924.2V935.8Q76.5 937.4 74.9 937.4H60.3Q58.7 937.4 58.7 935.8Z" fill="#f7efb4" stroke="#d2c672" stroke-width="1"/><polyline points="38.7,947.8 43.8,952.5 38.7,957.2" fill="none" stroke="#9e9e9e" stroke-width="1.9"/><path d="M58.7 946.2Q58.7 943.8 60.9 943.8H66.1Q67.5 943.8 68.3 945.6H75.1Q76.5 945.6 76.5 947.2V958.8Q76.5 960.4 74.9 960.4H60.3Q58.7 960.4 58.7 958.8Z" fill="#f7efb4" stroke="#d2c672" stroke-width="1"/><polyline points="38.7,970.8 43.8,975.5 38.7,980.2" fill="none" stroke="#9e9e9e" stroke-width="1.9"/><path d="M58.7 969.2Q58.7 966.8 60.9 966.8H66.1Q67.5 966.8 68.3 968.6H75.1Q76.5 968.6 76.5 970.2V981.8Q76.5 983.4 74.9 983.4H60.3Q58.7 983.4 58.7 981.8Z" fill="#f7efb4" stroke="#d2c672" stroke-width="1"/><path d="M58.7 992.2Q58.7 989.8 60.9 989.8H66.1Q67.5 989.8 68.3 991.6H75.1Q76.5 991.6 76.5 993.2V1004.8Q76.5 1006.4 74.9 1006.4H60.3Q58.7 1006.4 58.7 1004.8Z" fill="#f7efb4" stroke="#d2c672" stroke-width="1"/></svg>
<svg class="abs" style="left:0;top:0" width="319" height="890" viewBox="1 133 319 890"><rect x="297" y="158" width="20.5" height="833" fill="#f0f0f0" /><rect x="297" y="437" width="19.7" height="436" fill="#cbcbcb" /><path d="M302 977.6L306.6 982.2L311.2 977.6" fill="none" stroke="#555" stroke-width="2"/><rect x="2" y="157.3" width="317" height="1" fill="#c3c7d6" /><rect x="2" y="158" width="1.2" height="864" fill="#b9bbce" /><rect x="317" y="158" width="2" height="864" fill="#c6c8dc" /><rect x="319" y="132" width="1" height="891" fill="#f8f8f8" /><rect x="3.2" y="991" width="314.2" height="30" fill="#f5f5f5" /><rect x="3.2" y="991" width="39" height="30.4" fill="#fff" /><rect x="42" y="991" width="275.4" height="1" fill="#c6c8d8" /><rect x="2" y="1021" width="316.5" height="1.1" fill="#c3c5d6" /><rect x="42.5" y="991.5" width="37" height="27.5" fill="#ececec" stroke="#c6c8d8" stroke-width="1" /><rect x="80.5" y="991.5" width="39" height="27.5" fill="#ececec" stroke="#c6c8d8" stroke-width="1" /><rect x="18.5" y="996.5" width="15" height="14" fill="#f4f4f4" stroke="#8a8a8a" stroke-width="1" /><rect x="18.5" y="996.5" width="15" height="2.8" fill="#4a7fe0" /><polygon points="14.5,1001.5 16,1000 20.5,1000 22,1001.5 26,1001.5 26,1010 14.5,1010" fill="#e8b820" stroke="#b08a10" stroke-width="0.6" /><polygon points="19.5,1009.5 26,1005.5 32.5,1009.5 27.5,1014.5" fill="#8fc0f0" stroke="#3a6ab0" stroke-width="0.7" /><circle cx="19.5" cy="1009.5" r="1.1" fill="#e8101a"/><circle cx="26" cy="1005.5" r="1.1" fill="#e8101a"/><circle cx="32.5" cy="1009.5" r="1.1" fill="#e8101a"/><circle cx="27.5" cy="1014.5" r="1.1" fill="#e8101a"/><path d="M54.5 1004.8Q62 997.6 69.6 1004.8Q62 1012 54.5 1004.8Z" fill="#fff" stroke="#231a6e" stroke-width="1.5"/><circle cx="62" cy="1004.6" r="3.4" fill="#3f63c8"/><circle cx="62" cy="1004.6" r="1.3" fill="#0a0a20"/><rect x="92" y="1000" width="12.6" height="11" fill="#6b6b6b" rx="2.2"/><polygon points="104.6,1005.5 110,1001 110,1010 104.6,1005.5" fill="#6b6b6b" /><polygon points="103,1005.5 110,1000.6 110,1010.4" fill="#6b6b6b" /></svg>
</div>
<div id="view" class="abs"><svg class="abs" style="left:-3.4px;top:1px" width="1079" height="890" viewBox="320 133 1079 890">
<defs>
<linearGradient id="g2" gradientUnits="userSpaceOnUse" x1="727" y1="710" x2="1111" y2="540"><stop offset="0" stop-color="#90f6ff"/><stop offset="0.45" stop-color="#8aeaff"/><stop offset="1" stop-color="#80d9ff"/></linearGradient>
</defs>
<!-- beam 1 -->
<g id="beam1">
<polygon points="405,612.6 409,609 417,606.6 1303,738.6 1296.4,746.5 1296.4,789 1290,791.6 411,662.4 411.4,614.5" fill="#7dcdfd"/>
<polygon points="405,612.4 409,609 417,606.6 1303,738.6 1291,745.2" fill="#5e9fcb"/>
<polygon points="411.4,614 1296.4,746.2 1296.4,787.5 411.4,654.3" fill="#79c9fb"/>
<polygon points="411.4,655.5 1296.4,788.5 1291,790.6 411.4,659.6" fill="#5e9fcb"/>
<line x1="424" y1="656.2" x2="1294" y2="787.2" stroke="#b4eeff" stroke-width="0.9" stroke-dasharray="3 3.4"/>
</g>
<!-- green block under far end of beam 2 -->
<polygon points="1088.6,577.5 1120,561.7 1134.3,562.9 1134.3,612.9 1088.6,606.4" fill="#3df03d"/>
<line x1="1109.7" y1="568.6" x2="1109.7" y2="585.7" stroke="#1c5a1c" stroke-width="1.3"/>
<!-- beam 2 -->
<g id="beam2">
<polygon points="727.2,685 1111.4,520.5 1110.7,558.6 1120,561.7 1120,563.5 737.5,734.5 727.5,731" fill="#8ef3ff"/>
<polygon points="716.1,681.6 1097.9,510.7 1120.7,514.3 1111.4,519.5 1000,566.6 737.5,685.4 737.5,686.1 716.1,682.9" fill="#5e9fcb"/>
<polygon points="727.2,685 737.5,686.1 737.5,685.4 1000,566.6 1111.4,519.5 1110.7,558.6 727.5,727.6" fill="url(#g2)"/>
<polygon points="727.5,727.1 1110.7,557.8 1120,561.7 737.5,731 727.5,730" fill="#5e9fcb"/><line x1="727.5" y1="727.3" x2="1110.7" y2="558.1" stroke="#4b87b1" stroke-width="1.2"/>
<polygon points="717,729.3 727,725.4 727,731 717,730" fill="#5e9fcb"/>
</g>
<!-- red section outlines -->
<g stroke="#f00000" fill="none">
<line x1="716.1" y1="682.9" x2="737.5" y2="686.1" stroke-width="2"/>
<line x1="716.1" y1="730" x2="737.5" y2="733.2" stroke-width="2"/>
<line x1="726.4" y1="685" x2="726.4" y2="709" stroke-width="1.5"/>
<line x1="726.4" y1="709" x2="726.4" y2="733.5" stroke-width="1.5" stroke="#5a0000"/>
<line x1="1290.7" y1="745.4" x2="1302.9" y2="739.2" stroke-width="1.6"/>
<line x1="1297.3" y1="743" x2="1297.3" y2="790" stroke-width="1" stroke="#e04040"/>
</g>
<!-- support right end beam1 -->
<g>
<polygon points="1263,805.7 1284,788 1310,773.6 1331,800 1308.6,811.4" fill="#34e034" fill-opacity=".88"/>
<polygon points="1310,773.6 1331,800 1308.6,811.4 1296,795" fill="#28c428" fill-opacity=".5"/>
<path d="M1280 770.5L1302.5 762A12.2 13 0 0 1 1313 785.5L1291.5 795.5A12.2 13.5 0 0 1 1280 770.5Z" fill="#26d826" fill-opacity=".72"/>
<ellipse cx="1286" cy="782.5" rx="11.6" ry="13.4" fill="#1fd01f" fill-opacity=".5"/>
<line x1="1263" y1="811.6" x2="1307" y2="818" stroke="#3ae83a" stroke-width="2.2"/>
<line x1="1287" y1="800.7" x2="1331.4" y2="807.1" stroke="#3ae83a" stroke-width="2"/>
<line x1="1291" y1="792" x2="1303" y2="787" stroke="#7a4a10" stroke-width="1.6"/>
</g>
<!-- support left end beam1 -->
<g>
<polygon points="377.1,673.6 388.6,662.9 410,656 447.1,667.9 422.9,679.3" fill="#3ae43a" fill-opacity=".92"/>
<polygon points="410,656 447.1,667.9 422.9,679.3 412,672" fill="#2cc82c" fill-opacity=".45"/>
<circle cx="405" cy="648.6" r="16.6" fill="#22d822" fill-opacity=".78"/>
</g>
<!-- axes at origin -->
<g font-family="Liberation Sans, sans-serif" font-size="13">
<line x1="412" y1="634" x2="437" y2="638.2" stroke="#d80000" stroke-width="2.2"/>
<polygon points="436,635 446,639.4 436,642.6" fill="#f00000"/>
<text x="450" y="645" fill="#f00000">X</text>
<line x1="412" y1="634" x2="397" y2="641" stroke="#10e810" stroke-width="2.6"/><polygon points="399,637.5 393,643.5 400.5,644.5" fill="#10e810"/>
<text x="382.5" y="650.5" fill="#10e810">Y</text>
<line x1="412" y1="634" x2="412" y2="664" stroke="#0000d8" stroke-width="2.4"/>
<polygon points="408.6,662 415.4,662 412,673" fill="#0000e0"/>
<text x="407.3" y="687" fill="#0000f0">Z</text>
<circle cx="412" cy="633.6" r="3.3" fill="#f4e400"/>
</g>
<!-- axes bottom-left -->
<g font-family="Liberation Sans, sans-serif" font-size="13">
<line x1="385" y1="962" x2="411" y2="965.2" stroke="#d80000" stroke-width="2.2"/>
<polygon points="409.5,962 419.5,966 409.5,969.4" fill="#f00000"/>
<text x="423" y="972" fill="#f00000">X</text>
<line x1="385" y1="962" x2="368" y2="968.5" stroke="#20e020" stroke-width="2.4"/>
<polygon points="371,964.5 365.5,969.5 372,971" fill="#20e020"/>
<text x="355.5" y="976" fill="#20e020">Y</text>
<line x1="385" y1="962" x2="385" y2="990" stroke="#0000d8" stroke-width="2.4"/>
<polygon points="381.6,988 388.4,988 385,999" fill="#0000e0"/>
<text x="380.3" y="1014" fill="#0000f0">Z</text>
<circle cx="385" cy="961.5" r="3.2" fill="#f4e400"/>
</g>
<g id="cube" stroke-linejoin="round">
<polygon points="1257.5,178.6 1299.6,160.0 1372.4,171.3 1330.3,189.9" fill="#b4b4b4"/>
<polygon points="1257.5,178.6 1330.3,189.9 1330.3,271.7 1257.5,261.2" fill="#dedede"/>
<polygon points="1330.3,189.9 1372.4,171.3 1372.4,253.9 1330.3,271.7" fill="#cbcbcb"/>
<g stroke="#1c1c1c" stroke-width="1.3" fill="none">
<polygon points="1257.5,178.6 1299.6,160.0 1372.4,171.3 1330.3,189.9"/><polygon points="1257.5,178.6 1330.3,189.9 1330.3,271.7 1257.5,261.2"/><polygon points="1330.3,189.9 1372.4,171.3 1372.4,253.9 1330.3,271.7"/>
</g><g stroke="#1c1c1c" stroke-width="2.1" fill="none">
<line x1="1275.3" y1="181.3" x2="1275.3" y2="263.7"/>
<line x1="1275.3" y1="181.3" x2="1317.4" y2="162.7"/>
<line x1="1311.7" y1="187.0" x2="1311.7" y2="269.0"/>
<line x1="1311.7" y1="187.0" x2="1353.8" y2="168.4"/>
<line x1="1341.7" y1="184.9" x2="1341.7" y2="266.9"/>
<line x1="1341.7" y1="184.9" x2="1268.8" y2="173.5"/>
<line x1="1362.3" y1="175.8" x2="1362.3" y2="258.1"/>
<line x1="1362.3" y1="175.8" x2="1289.5" y2="164.4"/>
<line x1="1257.5" y1="199.6" x2="1330.3" y2="210.8"/>
<line x1="1330.3" y1="210.8" x2="1372.4" y2="192.3"/>
<line x1="1257.5" y1="240.9" x2="1330.3" y2="251.6"/>
<line x1="1330.3" y1="251.6" x2="1372.4" y2="233.6"/>
</g>
<text x="1286.1" y="233.6" font-family="Liberation Sans, sans-serif" font-weight="bold" font-size="15.5" fill="#62ec62" stroke="#62ec62" stroke-width="0.5" transform="skewY(8)" style="transform-box:fill-box;transform-origin:center">-Y</text>
<text x="1345.7" y="229.1" font-family="Liberation Sans, sans-serif" font-weight="bold" font-size="14.5" fill="#f08a8a" textLength="9.5" lengthAdjust="spacingAndGlyphs" transform="skewY(-22)" style="transform-box:fill-box;transform-origin:center">-X</text>
<text x="1305.2" y="178.6" font-family="Liberation Sans, sans-serif" font-size="7" fill="#9a9af0" textLength="14" lengthAdjust="spacingAndGlyphs" transform="skewX(-50)" style="transform-box:fill-box;transform-origin:center">+Z</text>
</g>
</svg>
</div>
<div id="status" class="abs">
<div class="t" style="left:6px;top:6px;letter-spacing:-0.1px">Sets new nodal release via dialog box.</div>
<svg class="abs" style="left:0;top:0" width="1398" height="26" viewBox="1 1023 1398 26"><rect x="405" y="1025" width="41.5" height="22.5" fill="#ebebeb" /><rect x="405" y="1025" width="41.5" height="1" fill="#b4b4b4" /><rect x="405" y="1025" width="1" height="22.5" fill="#b4b4b4" /><rect x="445.5" y="1025" width="1" height="22.5" fill="#fdfdfd" /><rect x="490" y="1025" width="45" height="22.5" fill="#ebebeb" /><rect x="490" y="1025" width="45" height="1" fill="#b4b4b4" /><rect x="490" y="1025" width="1" height="22.5" fill="#b4b4b4" /><rect x="534" y="1025" width="1" height="22.5" fill="#fdfdfd" /><rect x="537" y="1025" width="53.5" height="22.5" fill="#ebebeb" /><rect x="537" y="1025" width="53.5" height="1" fill="#b4b4b4" /><rect x="537" y="1025" width="1" height="22.5" fill="#b4b4b4" /><rect x="589.5" y="1025" width="1" height="22.5" fill="#fdfdfd" /><rect x="821.9" y="1024.5" width="1.2" height="23" fill="#c9c9c9" /><rect x="1015.8" y="1024.5" width="1.2" height="23" fill="#c9c9c9" /><rect x="1096.2" y="1024.5" width="1.2" height="23" fill="#c9c9c9" /><rect x="1190.9" y="1024.5" width="1.2" height="23" fill="#c9c9c9" /><rect x="1284.7" y="1024.5" width="1.2" height="23" fill="#c9c9c9" /><rect x="1379" y="1024.5" width="1.2" height="23" fill="#c9c9c9" /><rect x="1393" y="1043.6" width="2.6" height="2.6" fill="#a8a8a8" /><rect x="1393" y="1039.6" width="2.6" height="2.6" fill="#a8a8a8" /><rect x="1393" y="1035.6" width="2.6" height="2.6" fill="#a8a8a8" /><rect x="1389" y="1043.6" width="2.6" height="2.6" fill="#a8a8a8" /><rect x="1389" y="1039.6" width="2.6" height="2.6" fill="#a8a8a8" /><rect x="1385" y="1043.6" width="2.6" height="2.6" fill="#a8a8a8" /></svg><div class="t" style="left:408.7px;top:7px;letter-spacing:-0.1px;transform:scaleX(0.92);transform-origin:0 0">SNAP</div><div class="t" style="left:452.7px;top:7px;letter-spacing:-0.1px;transform:scaleX(0.92);transform-origin:0 0">GRID</div><div class="t" style="left:493.7px;top:7px;letter-spacing:-0.1px;transform:scaleX(0.92);transform-origin:0 0">LGRID</div><div class="t" style="left:540.7px;top:7px;letter-spacing:-0.1px;transform:scaleX(0.92);transform-origin:0 0">OSNAP</div><div class="t" style="left:825.7px;top:7px;letter-spacing:-0.1px;transform:scaleX(0.93);transform-origin:0 0">CS: Global XYZ</div><div class="t" style="left:1019.2px;top:7px;letter-spacing:-0.1px;transform:scaleX(0.93);transform-origin:0 0">Plane: XY</div>
</div>
<div class="menu" style="left:137px;top:60px;width:238px;height:383px">
<div class="mi" style="top:3px"><div class="t" style="left:14px;letter-spacing:-0.419px;">Basic Objects</div><div class="arr" style="left:212px;top:6.6px"></div></div>
<div class="mi sel" style="top:28px"><div class="t" style="left:14px;letter-spacing:-0.41px;">Special Objects</div><div class="arr" style="left:212px;top:6.6px"></div></div>
<div class="mi" style="top:53px"><div class="t" style="left:14px;letter-spacing:-0.16px;">Types for Nodes</div><div class="arr" style="left:212px;top:6.6px"></div></div>
<div class="mi" style="top:78px"><div class="t" style="left:14px;letter-spacing:-0.393px;">Types for Lines</div><div class="arr" style="left:212px;top:6.6px"></div></div>
<div class="mi" style="top:103px"><div class="t" style="left:14px;letter-spacing:-0.155px;">Types for Members</div><div class="arr" style="left:212px;top:6.6px"></div></div>
<div class="mi" style="top:128px"><div class="t" style="left:14px;letter-spacing:-0.382px;">Types for Surfaces</div><div class="arr" style="left:212px;top:6.6px"></div></div>
<div class="mi" style="top:153px"><div class="t" style="left:14px;letter-spacing:-0.273px;">Types for Solids</div><div class="arr" style="left:212px;top:6.6px"></div></div>
<div class="mi" style="top:178px"><div class="t" style="left:14px;letter-spacing:-0.292px;">Types for Special Objects</div><div class="arr" style="left:212px;top:6.6px"></div></div>
<div class="mi" style="top:203px"><div class="t" style="left:14px;letter-spacing:-0.107px;">Imperfections</div><div class="arr" style="left:212px;top:6.6px"></div></div>
<div class="mi" style="top:228px"><div class="t" style="left:14px;letter-spacing:-0.223px;">Load Cases &amp; Combinations</div><div class="arr" style="left:212px;top:6.6px"></div></div>
<div class="mi" style="top:253px"><div class="t" style="left:14px;letter-spacing:-0.162px;">Load Wizards</div><div class="arr" style="left:212px;top:6.6px"></div></div>
<div class="mi" style="top:278px"><div class="t" style="left:14px;letter-spacing:-0.258px;">Loads</div><div class="arr" style="left:212px;top:6.6px"></div></div>
<div class="mi" style="top:303px"><div class="t" style="left:14px;letter-spacing:-0.292px;">Calculation Diagrams</div><div class="arr" style="left:212px;top:6.6px"></div></div>
<div class="mi" style="top:328px"><div class="t" style="left:14px;letter-spacing:-0.337px;">Guide Objects</div><div class="arr" style="left:212px;top:6.6px"></div></div>
<div class="mi" style="top:353px"><div class="t" style="left:14px;letter-spacing:-0.12px;">Printout Reports</div><div class="arr" style="left:212px;top:6.6px"></div></div>
</div>
<div class="menu" style="left:368px;top:85px;width:236px;height:308px">
<div class="mi" style="top:3px"><div class="t" style="left:14px;letter-spacing:-0.274px;">Intersections</div><div class="arr" style="left:210px;top:6.6px"></div></div>
<div class="mi" style="top:28px"><div class="t" style="left:14px;letter-spacing:-0.434px;">Surface Results Adjustments</div><div class="arr" style="left:210px;top:6.6px"></div></div>
<div class="mi" style="top:53px"><div class="t" style="left:14px;letter-spacing:-0.487px;">Surface Contacts</div><div class="arr" style="left:210px;top:6.6px"></div></div>
<div class="mi" style="top:78px"><div class="t" style="left:14px;letter-spacing:-0.378px;">Rigid Links</div><div class="arr" style="left:210px;top:6.6px"></div></div>
<div class="mi" style="top:103px"><div class="t" style="left:14px;letter-spacing:-0.467px;">Result Sections</div><div class="arr" style="left:210px;top:6.6px"></div></div>
<div class="mi" style="top:128px"><div class="t" style="left:14px;letter-spacing:-0.144px;">Structure Modifications</div><div class="arr" style="left:210px;top:6.6px"></div></div>
<div class="mi" style="top:153px"><div class="t" style="left:14px;letter-spacing:-0.722px;">Blocks</div><div class="arr" style="left:210px;top:6.6px"></div></div>
<div class="mi dis" style="top:178px"><div class="t" style="left:14px;letter-spacing:-0.38px;">Boreholes</div><div class="arr" style="left:210px;top:6.6px"></div></div>
<div class="mi dis" style="top:203px"><div class="t" style="left:14px;letter-spacing:-0.379px;">Soil Massifs</div><div class="arr" style="left:210px;top:6.6px"></div></div>
<div class="mi sel" style="top:228px"><div class="t" style="left:14px;letter-spacing:-0.327px;">Nodal Releases</div><div class="arr" style="left:210px;top:6.6px"></div></div>
<div class="mi" style="top:253px"><div class="t" style="left:14px;letter-spacing:-0.609px;">Line Releases</div><div class="arr" style="left:210px;top:6.6px"></div></div>
<div class="mi" style="top:278px"><div class="t" style="left:14px;letter-spacing:-0.62px;">Surface Releases</div><div class="arr" style="left:210px;top:6.6px"></div></div>
</div>
<div class="menu" style="left:597px;top:310px;width:169px;height:33px">
<div class="mi sel" style="top:3px;left:3px;right:3px"><svg class="abs" style="left:0;top:0" width="30" height="25" viewBox="601 314 30 25"><path d="M604.5 319.5L610 327M604.5 323L610 327M610.6 316V327" stroke="#2d4f86" stroke-width="1" fill="none"/><polygon points="608.6,316 609.6,319.6 612.6,318.2 610.8,321.2 613.6,322.6 610.6,323.2 610.4,326.6 608.4,323.6 605.4,325 606.8,322 604.4,320 607.6,319.6" fill="#ffff00" stroke="#b8b84a" stroke-width="0.4"/><rect x="613.5" y="316.6" width="10" height="8" fill="#e8e8e8" stroke="#6e6e6e" stroke-width="1"/><rect x="614" y="317" width="9" height="2.4" fill="#2b3fae"/><rect x="614.4" y="317.3" width="1.5" height="1.5" fill="#dde"/><circle cx="610.6" cy="327.4" r="1.7" fill="#e07818"/><rect x="604" y="333.4" width="20" height="1.4" fill="#456a9c"/><circle cx="610.6" cy="334.1" r="1.9" fill="#e8101a"/></svg>
<div class="t" style="left:38px;letter-spacing:-0.33px">Dialog Box...</div></div>
</div>
<svg class="abs" style="left:58.5px;top:17px;overflow:visible" width="88" height="68" viewBox="58.5 17 88 68"><path d="M132.5 49Q115.26 36.61 100.02 31.41A20 20 0 1 0 100.02 66.59Q115.26 61.39 132.5 49Z" fill="#000" fill-opacity=".42" transform="translate(1.8,2.8)" style="filter:blur(2.4px)"/><path d="M132.5 49Q115.26 36.61 100.02 31.41A20 20 0 1 0 100.02 66.59Q115.26 61.39 132.5 49Z" fill="#17a88b"/><text x="94.7" y="57.2" font-family="Liberation Sans, sans-serif" font-size="22.3" fill="#fff" text-anchor="middle">A</text></svg><svg class="abs" style="left:3px;top:661px;overflow:visible" width="88.5" height="68" viewBox="3 661 88.5 68"><path d="M77.5 693Q59.96 680.58 44.41 675.35A20 20 0 1 0 44.41 710.65Q59.96 705.42 77.5 693Z" fill="#000" fill-opacity=".42" transform="translate(1.8,2.8)" style="filter:blur(2.4px)"/><path d="M77.5 693Q59.96 680.58 44.41 675.35A20 20 0 1 0 44.41 710.65Q59.96 705.42 77.5 693Z" fill="#17a88b"/><text x="39.4" y="700.6" font-family="Liberation Sans, sans-serif" font-size="21.3" fill="#fff" text-anchor="middle">B</text></svg>
<div class="abs" style="left:0;top:0;width:1400px;height:1050px;border:1px solid #6e6e6e;border-bottom:1.5px solid #5c5c5c;pointer-events:none"></div>
</body></html>
